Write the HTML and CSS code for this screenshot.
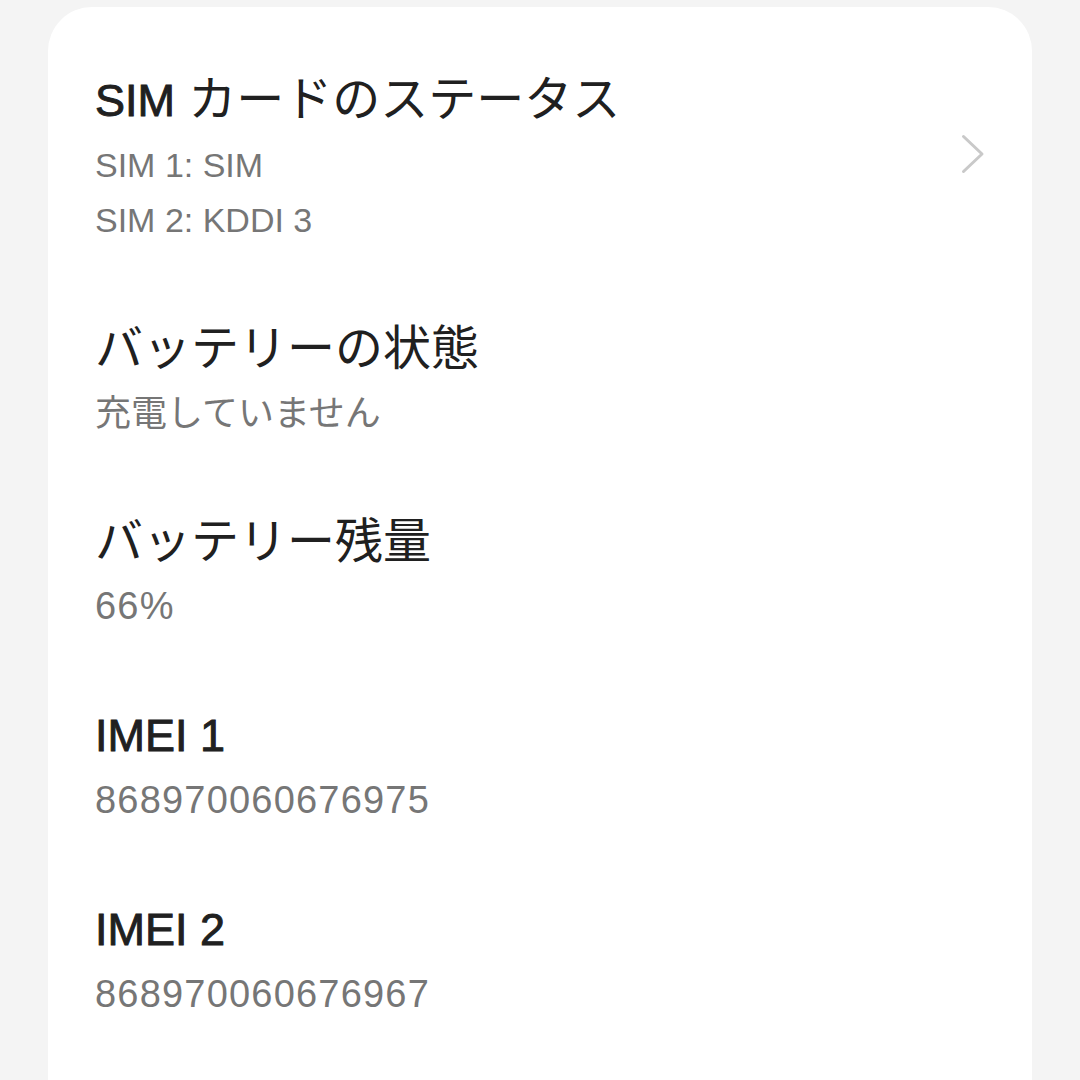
FILE: index.html
```html
<!DOCTYPE html>
<html lang="ja">
<head>
    <meta charset="UTF-8">
    <meta name="viewport" content="width=device-width, initial-scale=1.0">
    <title>端末情報</title>
    <link rel="stylesheet" href="styles.css">
</head>
<body>

    <div class="card">
        <div class="row">
            <div class="row-text">
                <h2 class="title"><span class="latin">SIM</span> カードのステータス</h2>
                <p class="sub">SIM 1: SIM</p>
                <p class="sub">SIM 2: KDDI 3</p>
            </div>
            <svg class="chevron" width="24" height="40" viewBox="0 0 24 40">
                <path d="M2.5 2.5 L21 20 L2.5 37.5" fill="none" stroke="#c9c9c9" stroke-width="3" stroke-linecap="round" stroke-linejoin="round"/>
            </svg>
        </div>

        <div class="row">
            <div class="row-text">
                <h2 class="title">バッテリーの状態</h2>
                <p class="sub ja">充電していません</p>
            </div>
        </div>

        <div class="row">
            <div class="row-text">
                <h2 class="title">バッテリー残量</h2>
                <p class="sub num">66%</p>
            </div>
        </div>

        <div class="row">
            <div class="row-text">
                <h2 class="title"><span class="latin">IMEI 1</span></h2>
                <p class="sub num">868970060676975</p>
            </div>
        </div>

        <div class="row">
            <div class="row-text">
                <h2 class="title"><span class="latin">IMEI 2</span></h2>
                <p class="sub num">868970060676967</p>
            </div>
        </div>
    </div>

</body>
</html>
```

FILE: styles.css
```css
body { margin: 0; padding: 7px 48px 0; background-color: #f4f4f4; font-family: "Liberation Sans", "Noto Sans CJK JP", sans-serif; height: 1073px; overflow: hidden; }
.card { background-color: #fff; border-radius: 44px 44px 0 0; padding: 27px 0 60px; }
.row { display: flex; align-items: center; padding: 36px 47px 35px 47px; }
.row-text { flex-grow: 1; }
.title { margin: 0 0 7px; font-size: 48px; line-height: 60px; font-weight: 400; color: #202020; }
.title .latin { font-size: 45px; -webkit-text-stroke: 0.9px #202020; }
.sub { margin: 0; font-size: 34px; line-height: 55px; color: #767676; }
.sub.ja { font-size: 36px; }
.sub.num { font-size: 38px; letter-spacing: 1.2px; }
.chevron { flex-shrink: 0; margin-bottom: 10px; }
```
